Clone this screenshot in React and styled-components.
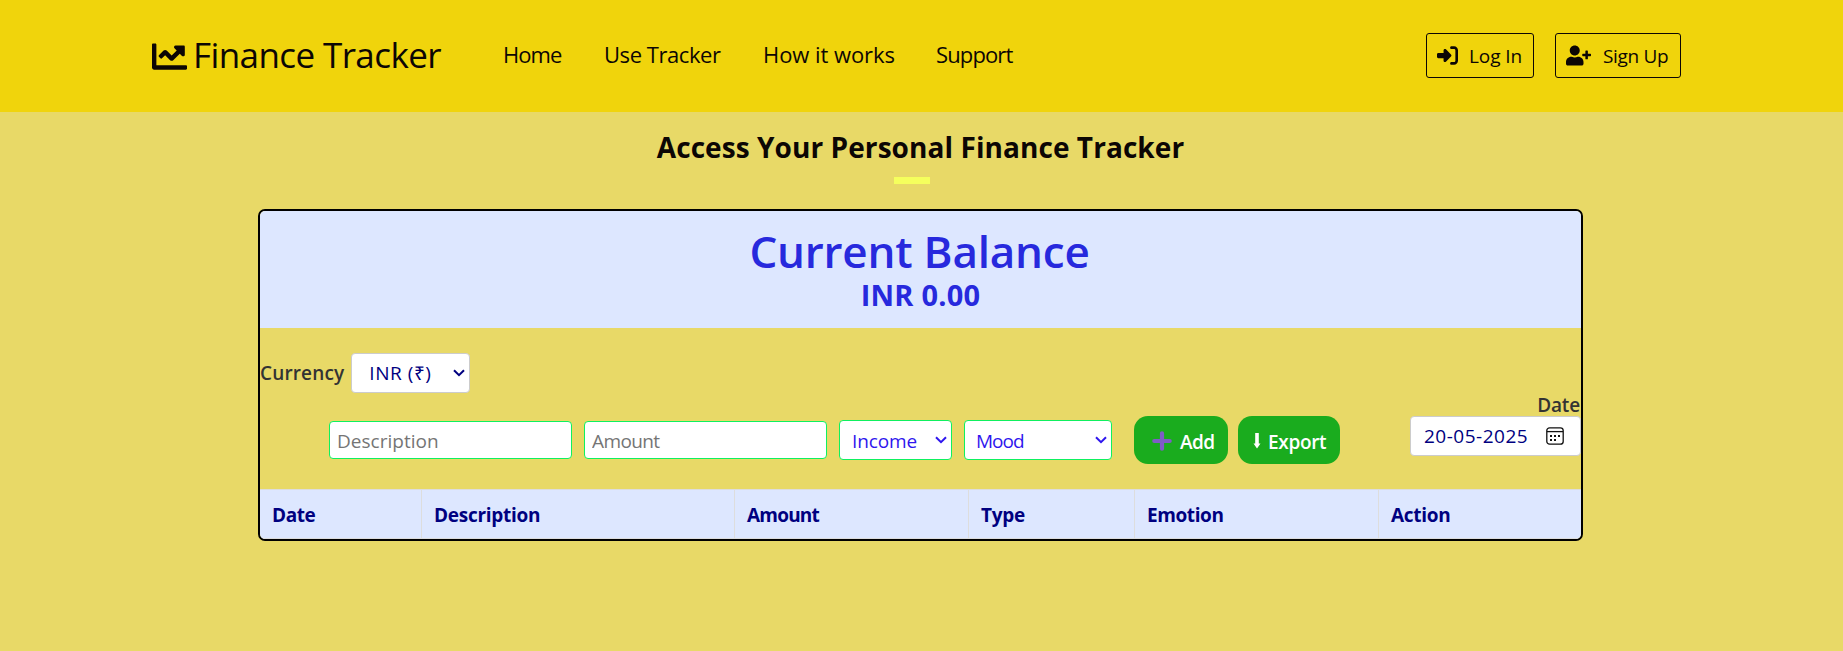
import React from 'react';
import styled, { createGlobalStyle } from 'styled-components';
import { FaChartLine, FaUserPlus } from 'react-icons/fa';
import { FaRightToBracket } from 'react-icons/fa6';

const Global = createGlobalStyle`
  *{box-sizing:border-box}
  body{margin:0;background:#e8d967;font-family:"Trebuchet MS","Open Sans",sans-serif;color:#0c0604;min-height:100vh}
`;

const Header = styled.header`
  display:flex;align-items:center;height:112px;padding:0 162px 1px 152px;background:#f0d40c;
`;
const Brand = styled.a`
  display:flex;align-items:center;gap:6px;width:351px;font-size:35px;line-height:48px;
  letter-spacing:-.6px;padding-bottom:1px;white-space:nowrap;
  svg{margin-top:2px;flex:none}
`;
const Nav = styled.nav`
  display:grid;grid-template-columns:101px 159px 173px auto;font-size:22px;line-height:30px;
  padding-bottom:3px;white-space:nowrap;
`;
const NavLink = styled.a`letter-spacing:${p => p.$ls}px;`;
const Account = styled.div`display:flex;gap:21px;margin-left:auto;`;
const AccountButton = styled.a`
  display:flex;align-items:center;gap:${p => p.$gap}px;width:${p => p.$w}px;height:45px;padding-left:10px;
  border:1px solid #0c0604;border-radius:3px;font-size:19px;letter-spacing:${p => p.$ls}px;white-space:nowrap;
  svg{flex:none;margin-bottom:1px}
`;

const Main = styled.main`padding:14px 260px 0 258px;`;
const Title = styled.h1`
  margin:0;font-size:28px;font-weight:700;line-height:42px;letter-spacing:.07px;text-align:center;
`;
const Accent = styled.div`width:36px;height:7px;margin:9px 0 25px calc(50% - 26.5px);background:#f5ff5d;`;
const Card = styled.section`border:2px solid #000;border-radius:7px;overflow:hidden;`;

const Balance = styled.div`
  height:117px;padding-top:14px;background:#dde7ff;color:#2729dd;text-align:center;font-weight:600;
`;
const BalanceTitle = styled.div`font-size:44px;line-height:53px;letter-spacing:-.22px;padding-right:2px;`;
const BalanceValue = styled.div`font-size:29px;font-weight:700;line-height:34px;letter-spacing:.2px;`;

const CurrencyRow = styled.div`display:flex;align-items:center;gap:7px;height:65px;padding-top:25px;`;
const Label = styled.label`
  font-size:19px;font-weight:600;line-height:23px;color:#333;letter-spacing:${p => p.$ls}px;
`;
const Select = styled.div`
  display:flex;align-items:center;justify-content:space-between;width:${p => p.$w}px;height:40px;
  padding:${p => p.$pt || 0}px ${p => p.$pr}px 0 ${p => p.$pl}px;background:#fff;border:1px solid ${p => p.$line || '#0ff060'};border-radius:4px;
  font-size:19px;color:${p => p.$ink || '#2f16ee'};letter-spacing:${p => p.$ls}px;white-space:nowrap;
  svg{flex:none;margin-bottom:${p => p.$pt || 0}px}
`;
const EntryRow = styled.div`display:flex;justify-content:space-between;padding:0 0 25px 69px;`;
const Entry = styled.form`display:flex;align-items:center;gap:12px;height:48px;margin-top:23px;`;
const Field = styled.input`
  width:243px;height:38px;padding:2px 7px 0;border:1px solid #0ff060;border-radius:4px;background:#fff;
  font:19px "Trebuchet MS","Open Sans",sans-serif;letter-spacing:${p => p.$ls}px;
  &::placeholder{color:#757575;opacity:1}
`;
const Actions = styled.div`display:flex;gap:10px;margin-left:10px;`;
const ActionButton = styled.div`
  display:flex;align-items:center;gap:${p => p.$gap}px;width:${p => p.$w}px;height:48px;
  padding:4px 0 0 ${p => p.$pl}px;border-radius:14px;background:#1aac1e;color:#fff;font-size:19px;font-weight:600;
  letter-spacing:${p => p.$ls}px;
  svg{flex:none;margin-bottom:2px}
`;
const DateColumn = styled.div`display:flex;flex-direction:column;align-items:flex-end;`;
const DateLabel = styled(Label)`height:23px;padding:1px 1px 0 0;`;
const DateBox = styled.div`
  display:flex;align-items:center;justify-content:space-between;width:171px;height:40px;
  padding:0 16px 0 13px;border:1px solid #ccc;border-radius:4px;background:#fff;
  font-size:19px;letter-spacing:.5px;color:#000080;
`;

const TableHead = styled.div`
  display:grid;grid-template-columns:162px 313px 234px 166px 244px 1fr;height:50px;
  border:solid #ddd;border-width:1px 0;background:#dde7ff;
`;
const HeadCell = styled.div`
  display:flex;align-items:center;padding:1px 0 0 12px;border-right:1px solid #ddd;
  font-size:19px;font-weight:700;color:#000080;letter-spacing:${p => p.$ls}px;
  &:last-child{border-right:0}
`;

const Chevron = () => (
  <svg width="12" height="8" viewBox="0 0 12 8" fill="none" stroke="currentColor" strokeWidth="2"><path d="M1 1.2 6 6.2l5-5" /></svg>
);
const Plus = () => (
  <svg width="20" height="20" viewBox="0 0 20 20" stroke="#7e5cc6" strokeWidth="4.2" strokeLinecap="round"><path d="M10 2.3v15.4M2.3 10h15.4" /></svg>
);
const DownArrow = () => (
  <svg width="8" height="16" viewBox="0 0 8 16" fill="#fff"><path d="M2.2 0h3.6v10.4h1.7L4 15.4.5 10.4h1.7z" /></svg>
);
const Calendar = () => (
  <svg width="18" height="18" viewBox="0 0 18 18" fill="none" stroke="#111" strokeWidth="1.3">
    <rect x=".8" y=".8" width="16.4" height="16.4" rx="2.8" />
    <path d="M1 4.6h16" />
    <path d="M4 9h2M8 9h2M12 9h2M4 13h2M8 13h2" strokeWidth="2" />
  </svg>
);

export default function App() {
  return (
    <>
      <Global />
      <Header>
        <Brand><FaChartLine size={35} /><span>Finance Tracker</span></Brand>
        <Nav>
          <NavLink $ls={-0.94}>Home</NavLink>
          <NavLink $ls={-0.44}>Use Tracker</NavLink>
          <NavLink $ls={-0.06}>How it works</NavLink>
          <NavLink $ls={-0.87}>Support</NavLink>
        </Nav>
        <Account>
          <AccountButton $w={108} $gap={11} $ls={-0.06}><FaRightToBracket size={21} />Log In</AccountButton>
          <AccountButton $w={126} $gap={12} $ls={-0.33}><FaUserPlus size={25} />Sign Up</AccountButton>
        </Account>
      </Header>
      <Main>
        <Title>Access Your Personal Finance Tracker</Title>
        <Accent />
        <Card>
          <Balance>
            <BalanceTitle>Current Balance</BalanceTitle>
            <BalanceValue>INR 0.00</BalanceValue>
          </Balance>
          <CurrencyRow>
            <Label $ls={0.15}>Currency</Label>
            <Select $w={119} $pl={17} $pr={4} $ls={0.52} $line="#ccc" $ink="#000080">INR (₹)<Chevron /></Select>
          </CurrencyRow>
          <EntryRow>
            <Entry>
              <Field placeholder="Description" $ls={0.02} />
              <Field placeholder="Amount" $ls={-0.6} />
              <Select $w={113} $pl={12} $pr={4} $pt={2} $ls={-0.12}>Income<Chevron /></Select>
              <Select $w={148} $pl={11} $pr={4} $pt={2} $ls={-1}>Mood<Chevron /></Select>
              <Actions>
                <ActionButton $w={94} $pl={18} $gap={8} $ls={-0.6}><Plus />Add</ActionButton>
                <ActionButton $w={102} $pl={15} $gap={7} $ls={-0.34}><DownArrow />Export</ActionButton>
              </Actions>
            </Entry>
            <DateColumn>
              <DateLabel $ls={-0.15}>Date</DateLabel>
              <DateBox>20-05-2025<Calendar /></DateBox>
            </DateColumn>
          </EntryRow>
          <TableHead>
            <HeadCell $ls={-0.4}>Date</HeadCell>
            <HeadCell $ls={-0.28}>Description</HeadCell>
            <HeadCell $ls={-0.8}>Amount</HeadCell>
            <HeadCell $ls={-0.28}>Type</HeadCell>
            <HeadCell $ls={-0.4}>Emotion</HeadCell>
            <HeadCell $ls={-0.3}>Action</HeadCell>
          </TableHead>
        </Card>
      </Main>
    </>
  );
}
